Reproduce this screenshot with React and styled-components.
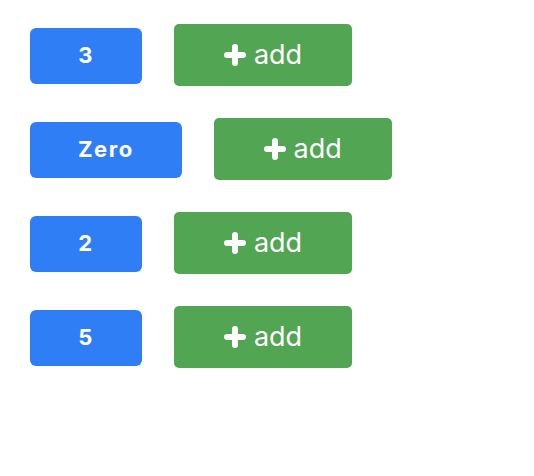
import styled, { createGlobalStyle } from 'styled-components';

const GlobalStyle = createGlobalStyle`
body {
  margin: 0;
  background: #ffffff;
  font-family: Inter, "Liberation Sans", sans-serif;
}
`

const Page = styled.div`
display: flex;
flex-direction: column;
gap: 32px;
padding: 24px 30px;
`

const Row = styled.div`
display: flex;
align-items: center;
gap: 32px;
height: 62px;
`

const Count = styled.button`
box-sizing: border-box;
flex-shrink: 0;
min-width: 112px;
height: 56px;
margin-top: 2px;
padding: 0 48px 2px;
border: none;
border-radius: 6px;
background-color: #2f7ef6;
color: white;
font-family: Inter, "Liberation Sans", sans-serif;
font-size: 22px;
font-weight: 700;
letter-spacing: 1.5px;
`

const AddButton = styled.button`
display: flex;
align-items: center;
justify-content: center;
gap: 8px;
flex-shrink: 0;
width: 178px;
height: 62px;
padding: 0 0 2px;
border: none;
border-radius: 5px;
background-color: #52a552;
color: white;
font-family: Inter, "Liberation Sans", sans-serif;
font-size: 27px;
font-weight: 400;
`

const Plus = () => (
  <svg width="22" height="22" viewBox="0 0 22 22" style={{ marginTop: 2 }}>
    <path d="M11 3v16M3 11h16" stroke="white" strokeWidth="6" strokeLinecap="round" />
  </svg>
)

const counters = ["3", "Zero", "2", "5"];

export default function App() {
  return (
    <>
      <GlobalStyle />
      <Page>
        {counters.map((value, i) => (
          <Row key={i}>
            <Count>{value}</Count>
            <AddButton><Plus />add</AddButton>
          </Row>
        ))}
      </Page>
    </>
  )
}
